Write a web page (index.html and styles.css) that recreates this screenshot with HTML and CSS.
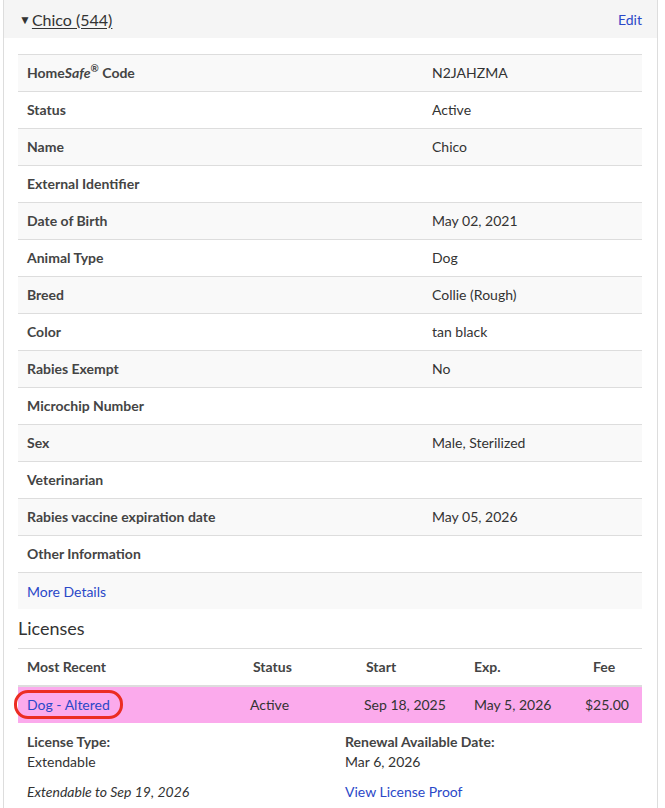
FILE: index.html
```html
<!DOCTYPE html>
<html lang="en">

<head>
    <meta charset="UTF-8">
    <meta name="viewport" content="width=device-width, initial-scale=1.0">
    <title>Chico (544)</title>
    <link rel="stylesheet" href="styles.css">
</head>

<body>
    <div class="panel">
        <div class="panel-heading">
            <span class="caret">&#9660;</span><a class="pet-name" href="#">Chico (544)</a>
            <a class="edit" href="#">Edit</a>
        </div>

        <div class="panel-body">
            <table class="details">
                <tbody>
                    <tr>
                        <th>Home<i>Safe</i><sup>&reg;</sup> Code</th>
                        <td>N2JAHZMA</td>
                    </tr>
                    <tr>
                        <th>Status</th>
                        <td>Active</td>
                    </tr>
                    <tr>
                        <th>Name</th>
                        <td>Chico</td>
                    </tr>
                    <tr>
                        <th>External Identifier</th>
                        <td></td>
                    </tr>
                    <tr>
                        <th>Date of Birth</th>
                        <td>May 02, 2021</td>
                    </tr>
                    <tr>
                        <th>Animal Type</th>
                        <td>Dog</td>
                    </tr>
                    <tr>
                        <th>Breed</th>
                        <td>Collie (Rough)</td>
                    </tr>
                    <tr>
                        <th>Color</th>
                        <td>tan black</td>
                    </tr>
                    <tr>
                        <th>Rabies Exempt</th>
                        <td>No</td>
                    </tr>
                    <tr>
                        <th>Microchip Number</th>
                        <td></td>
                    </tr>
                    <tr>
                        <th>Sex</th>
                        <td>Male, Sterilized</td>
                    </tr>
                    <tr>
                        <th>Veterinarian</th>
                        <td></td>
                    </tr>
                    <tr>
                        <th>Rabies vaccine expiration date</th>
                        <td>May 05, 2026</td>
                    </tr>
                    <tr>
                        <th>Other Information</th>
                        <td></td>
                    </tr>
                    <tr>
                        <td colspan="2" class="more"><a href="#">More Details</a></td>
                    </tr>
                </tbody>
            </table>

            <h3>Licenses</h3>

            <table class="licenses">
                <colgroup>
                    <col class="c-type">
                    <col class="c-status">
                    <col class="c-start">
                    <col class="c-exp">
                    <col class="c-fee">
                </colgroup>
                <thead>
                    <tr>
                        <th>Most Recent</th>
                        <th class="h-status">Status</th>
                        <th class="h-start">Start</th>
                        <th>Exp.</th>
                        <th class="h-fee">Fee</th>
                    </tr>
                </thead>
                <tbody>
                    <tr class="current">
                        <td><a class="circled" href="#">Dog - Altered</a></td>
                        <td>Active</td>
                        <td>Sep 18, 2025</td>
                        <td>May 5, 2026</td>
                        <td class="fee">$25.00</td>
                    </tr>
                </tbody>
            </table>

            <div class="license-info">
                <div>
                    <div class="info-label">License Type:</div>
                    <div>Extendable</div>
                    <div class="extend"><i>Extendable to Sep 19, 2026</i></div>
                </div>
                <div>
                    <div class="info-label">Renewal Available Date:</div>
                    <div>Mar 6, 2026</div>
                    <div class="extend"><a href="#">View License Proof</a></div>
                </div>
            </div>
        </div>
    </div>
</body>

</html>
```

FILE: styles.css
```css
body {
    font-family: Lato, "Open Sans", Arial, sans-serif;
    font-size: 14px;
    color: #333;
    margin: 0;
}

a {
    color: #2b48c8;
    text-decoration: none;
}

.panel {
    width: 653px;
    margin: -1px 0 0 3px;
    border: 1px solid #ddd;
    height: 830px;
}

.panel-heading {
    display: flex;
    align-items: center;
    height: 38px;
    padding: 0 15px 0 15px;
    background-color: #f5f5f5;
    font-size: 16px;
}

.caret {
    font-size: 12px;
    color: #333;
    margin-right: 1px;
}

.pet-name {
    color: #333;
    text-decoration: underline;
    text-underline-offset: 2px;
}

.edit {
    margin-left: auto;
    font-size: 14px;
}

.panel-body {
    padding: 16px 15px 0 14px;
}

table {
    width: 100%;
    border-collapse: collapse;
}

.details th,
.details td {
    border-top: 1px solid #ddd;
    padding: 8px 9px;
    line-height: 20px;
    text-align: left;
}

.details th {
    width: 387px;
    font-weight: 700;
    color: #444;
}

.details sup {
    font-size: 10px;
    line-height: 0;
}

.details tr:nth-child(odd) {
    background-color: #f9f9f9;
}

.details .more {
    padding-top: 9px;
    padding-bottom: 7px;
}

h3 {
    font-size: 18px;
    font-weight: 400;
    line-height: 22px;
    margin: 8px 0 9px 0;
}

.licenses {
    table-layout: fixed;
}

.c-type {
    width: 223px;
}

.c-status {
    width: 114px;
}

.c-start {
    width: 110px;
}

.c-exp {
    width: 113px;
}

.licenses th,
.licenses td {
    padding: 8px 9px;
    line-height: 20px;
    text-align: left;
    white-space: nowrap;
}

.licenses th {
    border-top: 1px solid #ddd;
    border-bottom: 2px solid #ddd;
    font-weight: 700;
    color: #444;
}

.licenses .h-status {
    padding-left: 12px;
}

.licenses .h-start {
    padding-left: 11px;
}

.licenses .h-fee {
    padding-left: 15px;
}

.licenses .fee {
    padding-left: 7px;
}

.current {
    background-color: #fbaaec;
}

.circled {
    display: inline-block;
    line-height: 17px;
    padding: 3px 10px;
    margin: -6px 0 -6px -13px;
    border: 3px solid #ec2c22;
    border-radius: 14px;
}

.license-info {
    display: grid;
    grid-template-columns: 318px 1fr;
    padding: 9px 9px 0 9px;
    line-height: 20px;
}

.info-label {
    font-weight: 700;
    color: #444;
}

.extend {
    margin-top: 10px;
}
```
